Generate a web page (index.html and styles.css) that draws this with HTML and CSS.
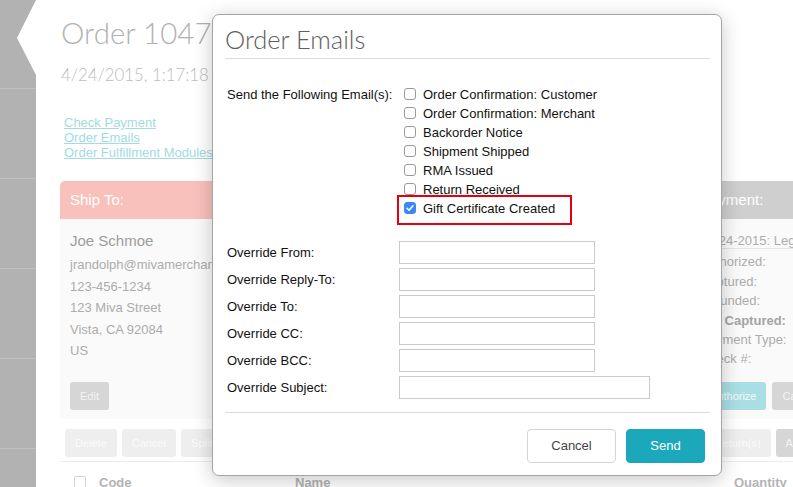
FILE: index.html
```html
<!DOCTYPE html>
<html lang="en">
<head>
<meta charset="utf-8">
<title>Order Emails</title>
<link rel="stylesheet" href="styles.css">
</head>
<body>
<div class="page">
  <nav class="sidebar">
    <div class="side-item active">
      <svg class="notch" width="36" height="88" viewBox="0 0 36 88"><polygon points="36,0 17,38 36,75" fill="#ffffff"/></svg>
    </div>
    <div class="side-item"></div>
    <div class="side-item"></div>
    <div class="side-item"></div>
    <div class="side-item"></div>
    <div class="side-item"></div>
  </nav>

  <main class="main">
    <h1 class="order-title">Order 1047 </h1>
    <div class="order-date">4/24/2015, 1:17:18 PM</div>
    <div class="links">
      <a href="#">Check Payment</a>
      <a href="#">Order Emails</a>
      <a href="#">Order Fulfillment Modules</a>
    </div>

    <div class="cards">
      <section class="card ship">
        <div class="card-head">Ship To:</div>
        <div class="card-body">
          <div class="cust-name">Joe Schmoe</div>
          <div class="addr">jrandolph@mivamerchant.com</div>
          <div class="addr">123-456-1234</div>
          <div class="addr">123 Miva Street</div>
          <div class="addr">Vista, CA 92084</div>
          <div class="addr">US</div>
          <div class="card-actions ship-actions"><button class="bbtn gray">Edit</button></div>
        </div>
      </section>
      <section class="card bill">
        <div class="card-head">Bill To:</div>
        <div class="card-body">
          <div class="cust-name">Joe Schmoe</div>
          <div class="addr">jrandolph@mivamerchant.com</div>
          <div class="addr">123-456-1234</div>
          <div class="addr">123 Miva Street</div>
          <div class="addr">Vista, CA 92084</div>
          <div class="addr">US</div>
          <div class="card-actions ship-actions"><button class="bbtn gray">Edit</button></div>
        </div>
      </section>
      <section class="card pay">
        <div class="card-head">Payment:</div>
        <div class="card-body">
          <div class="pay-select">04-24-2015: Legacy Payment</div>
          <div class="pay-lines">
            <div>Authorized:</div>
            <div>Captured:</div>
            <div>Refunded:</div>
            <div class="strong">Net Captured:</div>
            <div>Payment Type:</div>
            <div>Check #:</div>
          </div>
          <div class="card-actions pay-actions">
            <button class="bbtn teal">Authorize</button>
            <button class="bbtn gray">Capture</button>
          </div>
        </div>
      </section>
    </div>

    <div class="actions-row">
      <button class="bbtn faint">Delete</button>
      <button class="bbtn faint">Cancel</button>
      <button class="bbtn faint">Split Order</button>
      <button class="bbtn faint">Print Invoice</button>
      <button class="bbtn faint">Print Packing Slip</button>
      <button class="bbtn faint">Create Shipment(s)</button>
      <button class="bbtn faint">Change Order Status</button>
      <button class="bbtn faint">Return(s)</button>
      <button class="bbtn gray">Add Product</button>
    </div>

    <div class="table-head">
      <span class="th-check"></span>
      <span class="th-code">Code</span>
      <span class="th-name">Name</span>
      <span class="th-qty">Quantity</span>
    </div>
  </main>
</div>

<div class="modal" role="dialog" aria-label="Order Emails">
  <div class="modal-header">
    <h2 class="modal-title">Order Emails</h2>
  </div>
  <div class="modal-body">
    <div class="email-block">
      <div class="email-label">Send the Following Email(s):</div>
      <div class="opt-list">
        <label class="opt"><input type="checkbox"><span>Order Confirmation: Customer</span></label>
        <label class="opt"><input type="checkbox"><span>Order Confirmation: Merchant</span></label>
        <label class="opt"><input type="checkbox"><span>Backorder Notice</span></label>
        <label class="opt"><input type="checkbox"><span>Shipment Shipped</span></label>
        <label class="opt"><input type="checkbox"><span>RMA Issued</span></label>
        <label class="opt"><input type="checkbox"><span>Return Received</span></label>
        <label class="opt flagged"><input type="checkbox" checked><span>Gift Certificate Created</span></label>
      </div>
    </div>
    <div class="override-block">
      <label class="ov-label" for="ov-from">Override From:</label>
      <input class="ov-input" id="ov-from" type="text">
      <label class="ov-label" for="ov-reply">Override Reply-To:</label>
      <input class="ov-input" id="ov-reply" type="text">
      <label class="ov-label" for="ov-to">Override To:</label>
      <input class="ov-input" id="ov-to" type="text">
      <label class="ov-label" for="ov-cc">Override CC:</label>
      <input class="ov-input" id="ov-cc" type="text">
      <label class="ov-label" for="ov-bcc">Override BCC:</label>
      <input class="ov-input" id="ov-bcc" type="text">
      <label class="ov-label" for="ov-subject">Override Subject:</label>
      <input class="ov-input long" id="ov-subject" type="text">
    </div>
  </div>
  <div class="modal-footer">
    <button class="mbtn cancel">Cancel</button>
    <button class="mbtn send">Send</button>
  </div>
</div>
</body>
</html>
```

FILE: styles.css
```css
html, body {
  margin: 0;
  padding: 0;
}

body {
  position: relative;
  height: 487px;
  overflow: hidden;
  background: #ffffff;
  font-family: "Liberation Sans", Arial, Helvetica, sans-serif;
  color: #111111;
}

/* ---------- background page ---------- */
.page {
  display: flex;
  height: 487px;
  overflow: hidden;
}

.sidebar {
  flex: 0 0 36px;
  background: #b2b2b2;
}

.side-item {
  height: 89px;
  border-bottom: 1px solid #bfbfbf;
}

.side-item.active {
  height: 88px;
}

.notch {
  display: block;
}

.main {
  flex: 0 0 930px;
  padding: 15px 0 0 24px;
}

.order-title {
  margin: 0;
  padding-left: 1px;
  font-family: Lato, "Open Sans", sans-serif;
  font-weight: 300;
  font-size: 29.5px;
  line-height: 36px;
  color: #b1b1b1;
  white-space: nowrap;
}

.order-date {
  margin-top: 13px;
  padding-left: 1px;
  font-family: Lato, "Open Sans", sans-serif;
  font-weight: 300;
  font-size: 16.8px;
  line-height: 22px;
  color: #bcbcbc;
  white-space: nowrap;
}

.links {
  margin-top: 29px;
  padding-left: 4px;
  display: flex;
  flex-direction: column;
  align-items: flex-start;
  font-size: 13px;
  line-height: 15px;
}

.links a {
  color: #a2dbe0;
  text-decoration: underline;
  white-space: nowrap;
}

.cards {
  margin-top: 21px;
  display: grid;
  grid-template-columns: 300px 300px 300px;
  column-gap: 15px;
}

.card-head {
  height: 38px;
  line-height: 38px;
  padding: 0 10px;
  border-radius: 5px 5px 0 0;
  color: #ffffff;
  font-size: 15px;
}

.ship .card-head { background: #f9c1bc; }
.bill .card-head { background: #cfe9eb; }
.pay .card-head { background: #cfcfcf; }

.card-body {
  background: #fafafa;
  padding: 12px 10px 9px;
  border-radius: 0 0 5px 5px;
  font-size: 13px;
  color: #acacac;
  white-space: nowrap;
}

.cust-name {
  font-size: 15px;
  line-height: 20px;
  color: #9d9d9d;
  margin-bottom: 3px;
}

.addr {
  line-height: 21.5px;
}

.card-actions {
  display: flex;
  gap: 6px;
}

.ship-actions {
  margin-top: 20.5px;
}

.pay-select {
  margin-top: 3px;
  line-height: 14px;
  border-bottom: 1px solid #e4e4e4;
}

.pay-lines {
  margin-top: 3.3px;
  line-height: 19.4px;
}

.pay-lines .strong {
  font-weight: bold;
  color: #a4a4a4;
}

.pay-actions {
  margin-top: 13.3px;
}

.bbtn {
  height: 28px;
  margin: 0;
  padding: 0 10px;
  border: 0;
  border-radius: 3px;
  font-family: "Liberation Sans", Arial, sans-serif;
  font-size: 11px;
  color: #f3f3f3;
  white-space: nowrap;
  flex: 0 0 auto;
}

.bbtn.gray { background: #d6d6d6; }
.bbtn.teal { background: #a9dfe4; color: #f4fbfc; }
.bbtn.faint { background: #eeeeee; color: #fbfbfb; }

.actions-row {
  margin-top: 10px;
  padding-left: 5px;
  display: flex;
  gap: 5px;
}

.table-head {
  margin-top: 4px;
  border-top: 1px solid #ececec;
  height: 40px;
  display: flex;
  align-items: center;
  padding-left: 14px;
  font-size: 13px;
  font-weight: bold;
  color: #b3b3b3;
  white-space: nowrap;
}

.th-check {
  flex: 0 0 auto;
  box-sizing: border-box;
  width: 12px;
  height: 12px;
  border: 1px solid #d2d2d2;
  border-radius: 2px;
  background: #ffffff;
  margin-right: 13px;
}

.th-code { flex: 0 0 196px; }
.th-name { flex: 0 0 439px; }

/* ---------- modal ---------- */
.modal {
  position: absolute;
  left: 212px;
  top: 14px;
  width: 510px;
  box-sizing: border-box;
  background: #ffffff;
  border: 1px solid #a4a4a4;
  border-radius: 7px;
  box-shadow: 0 4px 20px rgba(0, 0, 0, 0.22);
}

.modal-header {
  margin: 0 11px 0 12px;
  padding: 9px 0 4px;
  border-bottom: 1px solid #dcdcdc;
}

.modal-title {
  margin: 0;
  font-family: Lato, "Open Sans", sans-serif;
  font-weight: 300;
  font-size: 25.5px;
  line-height: 30px;
  color: #5e5e5e;
}

.modal-body {
  padding: 25.5px 0 0 14px;
  font-size: 13px;
  color: #111111;
}

.email-block {
  display: grid;
  grid-template-columns: 172px auto;
}

.email-label {
  line-height: 19px;
  white-space: nowrap;
}

.opt {
  position: relative;
  display: flex;
  align-items: center;
  width: max-content;
  height: 19px;
  white-space: nowrap;
}

.opt input {
  -webkit-appearance: none;
  appearance: none;
  box-sizing: border-box;
  width: 12px;
  height: 12px;
  margin: 0 7px 0 5px;
  border: 1px solid #9a9a9a;
  border-radius: 3px;
  background: #ffffff;
  flex: 0 0 auto;
}

.opt input:checked {
  border-color: #3a87f6;
  background: #3a87f6 url("data:image/svg+xml;utf8,<svg xmlns='http://www.w3.org/2000/svg' viewBox='0 0 12 12'><path d='M3 6.3 L5 8.3 L9 3.8' fill='none' stroke='white' stroke-width='1.6' stroke-linecap='round' stroke-linejoin='round'/></svg>") center / 12px 12px no-repeat;
}

.opt.flagged::after {
  content: "";
  position: absolute;
  left: -2px;
  top: -4px;
  width: 175px;
  height: 30px;
  box-sizing: border-box;
  border: 2px solid #e5000f;
  pointer-events: none;
}

.override-block {
  margin-top: 23.5px;
  display: grid;
  grid-template-columns: 172px auto;
  row-gap: 4px;
  align-items: center;
}

.ov-label {
  line-height: 23px;
  white-space: nowrap;
}

.ov-input {
  display: block;
  box-sizing: border-box;
  width: 196px;
  height: 23px;
  margin: 0;
  padding: 0 4px;
  border: 1px solid #cacaca;
  border-radius: 0;
  background: #ffffff;
  font: 13px "Liberation Sans", Arial, sans-serif;
}

.ov-input.long {
  width: 251px;
}

.modal-footer {
  margin: 12.5px 11px 0 12px;
  border-top: 1px solid #dcdcdc;
  padding: 16px 5px 12px 0;
  display: flex;
  justify-content: flex-end;
  gap: 10px;
}

.mbtn {
  height: 34px;
  margin: 0;
  border-radius: 4px;
  font-family: "Liberation Sans", Arial, sans-serif;
  font-size: 13px;
  cursor: pointer;
}

.mbtn.cancel {
  width: 89px;
  background: #ffffff;
  border: 1px solid #d5d5d5;
  color: #444444;
}

.mbtn.send {
  width: 79px;
  background: #1ba8bb;
  border: 1px solid #1ba8bb;
  color: #ffffff;
}
```
